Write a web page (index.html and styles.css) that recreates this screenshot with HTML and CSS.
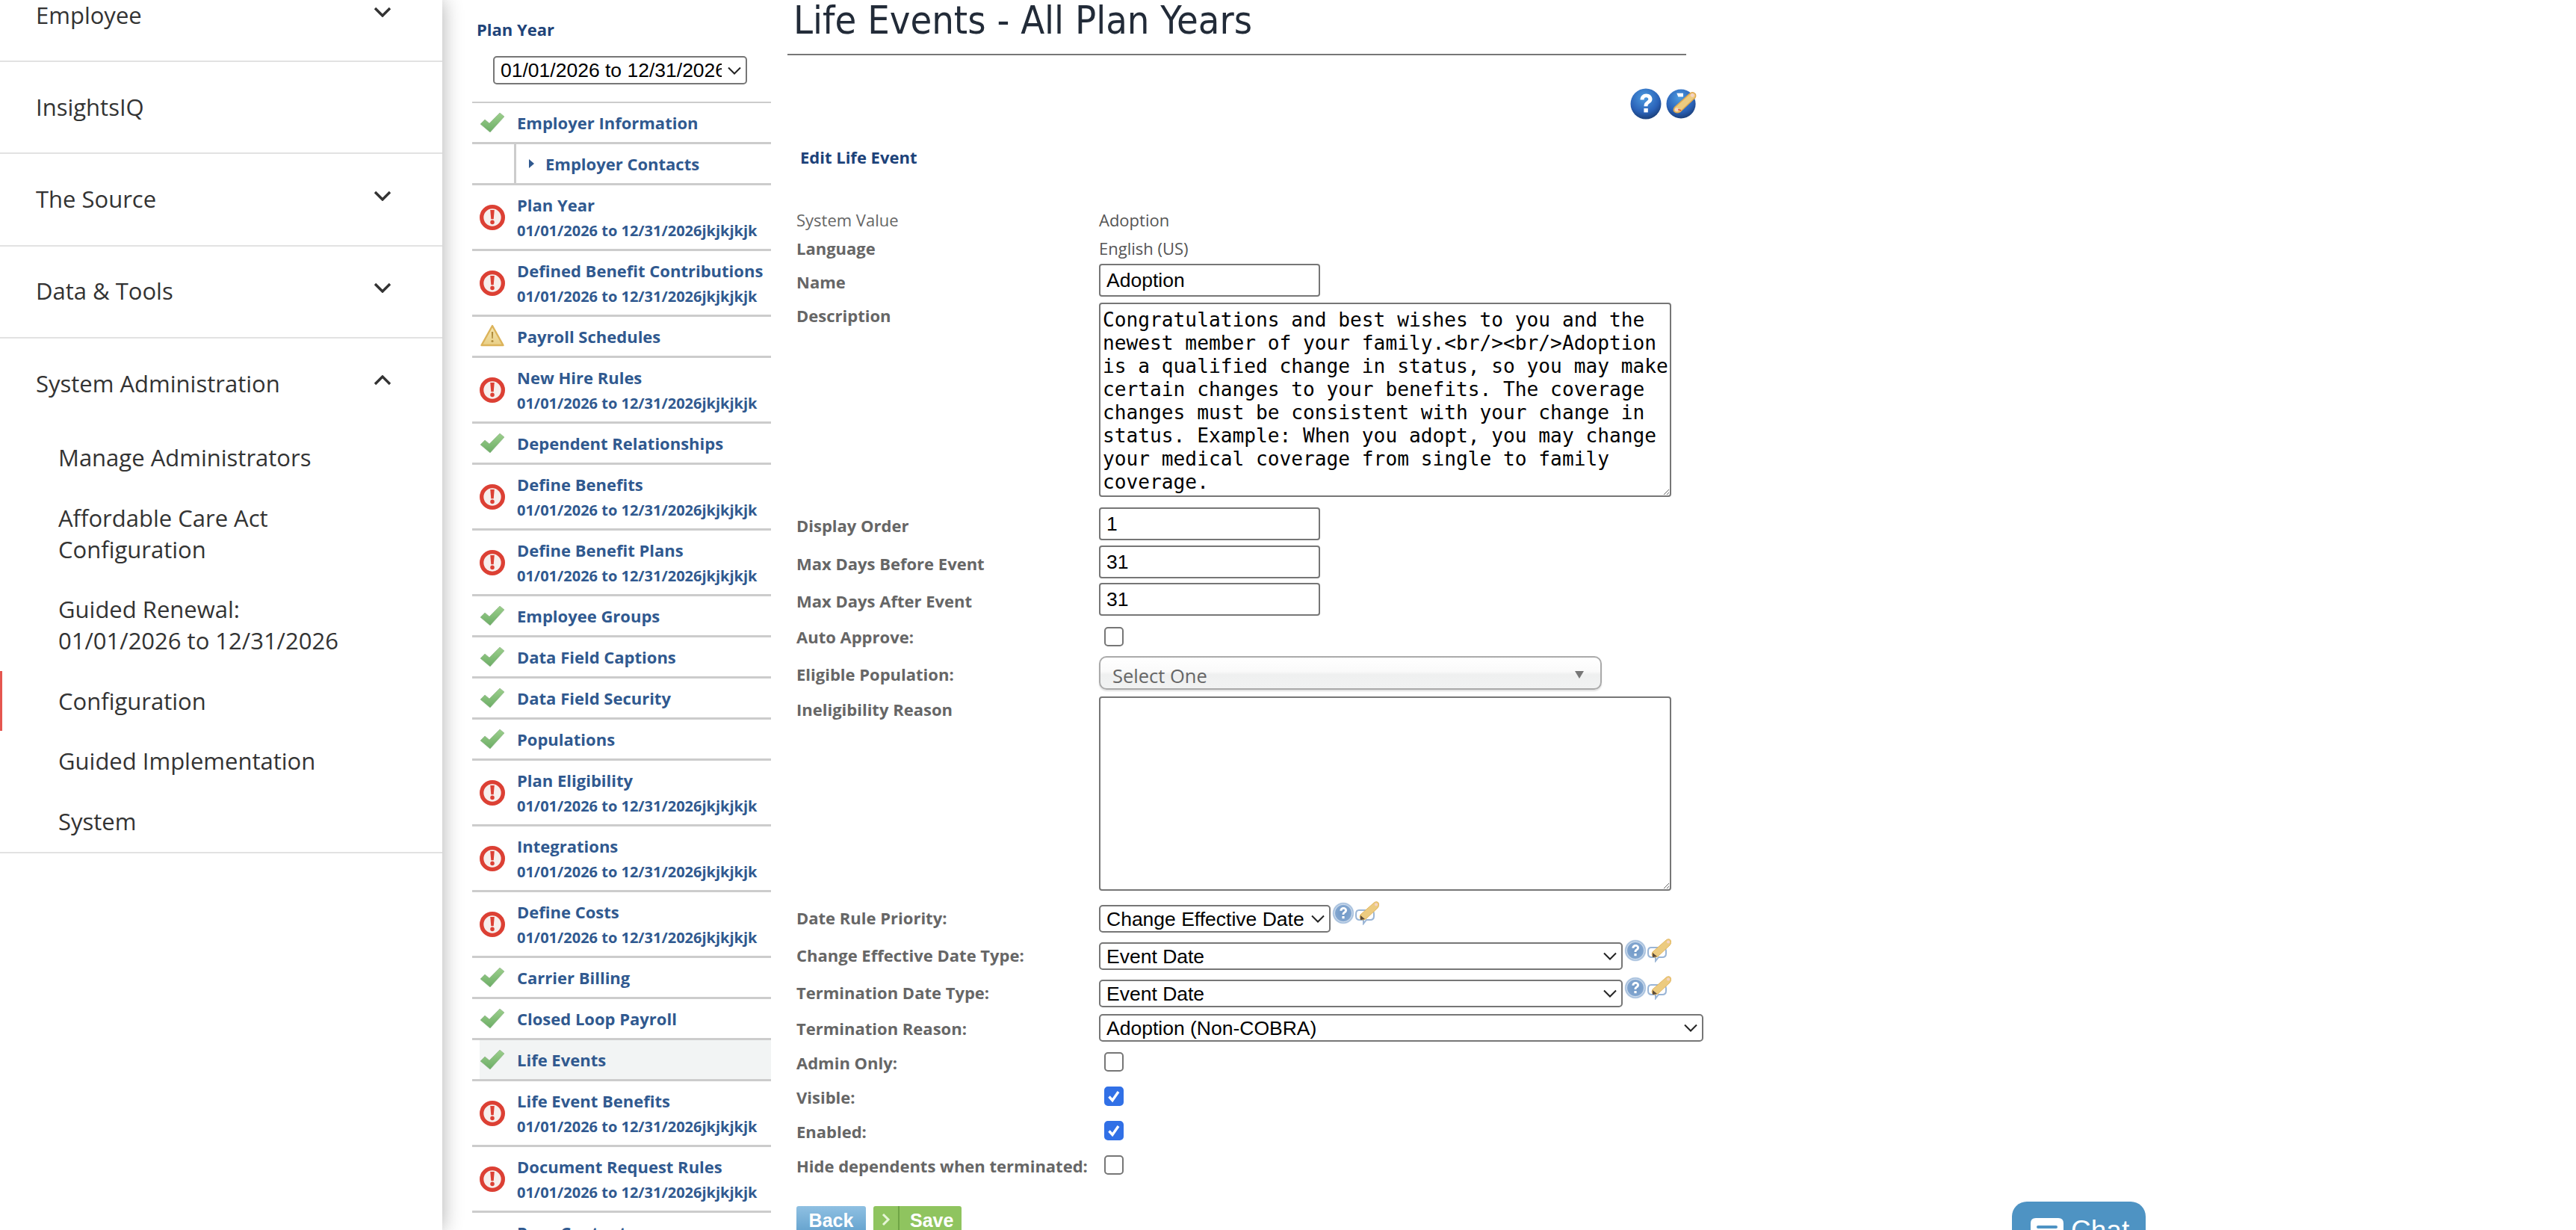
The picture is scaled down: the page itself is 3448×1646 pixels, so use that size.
FILE: index.html
```
<!DOCTYPE html>
<html lang="en">
<head>
<meta charset="utf-8">
<title>Life Events - All Plan Years</title>
<link rel="stylesheet" href="styles.css">
</head>
<body>
<svg class="defs" aria-hidden="true">
  <defs>
    <linearGradient id="gGreen" x1="0" y1="0" x2="0" y2="1"><stop offset="0" stop-color="#9ccf8c"/><stop offset="1" stop-color="#6cad66"/></linearGradient>
    <linearGradient id="gWarn" x1="0" y1="0" x2="0" y2="1"><stop offset="0" stop-color="#f6e6b0"/><stop offset="1" stop-color="#e9cf86"/></linearGradient>
    <radialGradient id="gBall" cx=".45" cy=".3" r=".8"><stop offset="0" stop-color="#4d9be0"/><stop offset=".6" stop-color="#2a62b8"/><stop offset="1" stop-color="#14305f"/></radialGradient>
    <radialGradient id="gSmall" cx=".5" cy=".5" r=".5"><stop offset="0" stop-color="#6f97c6"/><stop offset=".72" stop-color="#81a5cf"/><stop offset=".8" stop-color="#cfdded"/><stop offset=".9" stop-color="#9db9da"/><stop offset="1" stop-color="#dfe8f2"/></radialGradient>
    <symbol id="i-ok" viewBox="0 0 32 26">
      <path d="M0 15 L6 9 L12 14 L26 0 L32 5 L13 26 Z" fill="url(#gGreen)" stroke="#8fb088" stroke-width=".6"/>
    </symbol>
    <symbol id="i-err" viewBox="0 0 32 32">
      <circle cx="16" cy="16" r="13.5" fill="#f7efed" stroke="#dc4034" stroke-width="5"/>
      <path d="M13.4 6.5h5.2l-1 11.5h-3.2z" fill="#dc4034"/>
      <circle cx="16" cy="22" r="2.6" fill="#dc4034"/>
    </symbol>
    <symbol id="i-warn" viewBox="0 0 32 30">
      <path d="M16 2 L30.5 28 H1.5 Z" fill="url(#gWarn)" stroke="#dcb35a" stroke-width="2.4" stroke-linejoin="round"/>
      <path d="M14.8 10h2.4l-.5 9h-1.4z" fill="#b08d3c"/>
      <circle cx="16" cy="22.5" r="1.6" fill="#b08d3c"/>
    </symbol>
    <symbol id="i-help" viewBox="0 0 42 42">
      <circle cx="21" cy="21" r="20.5" fill="url(#gBall)"/>
      <path d="M13.5 15.5c0-5 3.6-8 8-8s8 2.8 8 7c0 3.6-2.4 5-4.2 6.3-1.4 1-1.8 1.7-1.8 3.5h-5c0-3.3.8-4.8 3-6.4 1.6-1.2 2.8-1.8 2.8-3.3 0-1.5-1.2-2.4-2.8-2.4-1.8 0-3 1.2-3 3.2z" fill="#fff"/>
      <rect x="18.4" y="27" width="5.4" height="5.4" fill="#fff"/>
    </symbol>
    <symbol id="i-edit" viewBox="0 0 44 42">
      <circle cx="21" cy="21" r="20.5" fill="url(#gBall)"/>
      <path d="M15 6h9v5h-7z" fill="#fff"/>
      <path d="M13 25 L33 7 Q37 3 41 7 Q43 11 39 14 L20 32 Q14 35 11 31 Q10 28 13 25Z" fill="#eccb80" stroke="#e0a94f" stroke-width="1.5"/>
      <circle cx="37" cy="9" r="2.6" fill="#f5d3c4"/>
      <circle cx="15" cy="29" r="2.6" fill="#f3d8c8"/>
      <path d="M17 29l4 1" stroke="#d33" stroke-width="1.4"/>
    </symbol>
    <symbol id="i-shelp" viewBox="0 0 30 30">
      <circle cx="15" cy="15" r="14.5" fill="url(#gSmall)"/>
      <path d="M10.4 11.8c0-3 2.2-4.8 4.8-4.8s4.8 1.7 4.8 4.2c0 2.1-1.4 3-2.5 3.8-.8.6-1.1 1-1.1 2.1h-2.9c0-2 .5-2.9 1.8-3.9 1-.7 1.7-1.1 1.7-2 0-.9-.7-1.4-1.7-1.4-1.1 0-1.8.7-1.8 1.9z" fill="#fff"/>
      <rect x="13.4" y="19" width="3.2" height="3.2" fill="#fff"/>
    </symbol>
    <symbol id="i-sedit" viewBox="0 0 32 32">
      <path d="M5 12h15q5 0 5 5v3q0 5-5 5h-5l-4 5v-5H6q-5 0-5-5v-3q0-5 4-5z" fill="#fff" stroke="#9ab5d6" stroke-width="2"/>
      <path d="M7 18 L24 3 Q28 -1 31 2 Q33 6 30 9 L14 24 Q9 26 7 24 Q5 21 7 18Z" fill="#eccb80" stroke="#e2b661" stroke-width="1"/>
      <path d="M7 19l6 5-6 1z" fill="#5a4a3a"/>
      <circle cx="28" cy="4.5" r="2" fill="#f5d3c4"/>
    </symbol>
  </defs>
</svg>

<div class="page">
  <aside class="side">
    <div class="side-scroll">
      <div class="side-row"><span>Employee</span><svg class="chev" viewBox="0 0 24 14"><path d="M2 2l10 10L22 2"/></svg></div>
      <div class="side-row"><span>InsightsIQ</span></div>
      <div class="side-row"><span>The Source</span><svg class="chev" viewBox="0 0 24 14"><path d="M2 2l10 10L22 2"/></svg></div>
      <div class="side-row"><span>Data &amp; Tools</span><svg class="chev" viewBox="0 0 24 14"><path d="M2 2l10 10L22 2"/></svg></div>
      <div class="side-group">
        <div class="side-row open"><span>System Administration</span><svg class="chev" viewBox="0 0 24 14"><path d="M2 12L12 2l10 10"/></svg></div>
        <ul class="sub">
          <li>Manage Administrators</li>
          <li>Affordable Care Act<br>Configuration</li>
          <li>Guided Renewal:<br>01/01/2026 to 12/31/2026</li>
          <li class="active">Configuration</li>
          <li>Guided Implementation</li>
          <li>System</li>
        </ul>
      </div>
    </div>
  </aside>

  <nav class="wizard">
    <div class="wiz-title">Plan Year</div>
    <select class="sel wiz-sel"><option>01/01/2026 to 12/31/2026jkjkjkjk</option></select>
    <ul class="steps">
      <li class="step"><svg class="ic ic-ok"><use href="#i-ok"/></svg><a>Employer Information</a></li>
      <li class="step child"><span class="tri"></span><a>Employer Contacts</a></li>
      <li class="step two"><svg class="ic ic-err"><use href="#i-err"/></svg><a>Plan Year<small>01/01/2026 to 12/31/2026jkjkjkjk</small></a></li>
      <li class="step two"><svg class="ic ic-err"><use href="#i-err"/></svg><a>Defined Benefit Contributions<small>01/01/2026 to 12/31/2026jkjkjkjk</small></a></li>
      <li class="step"><svg class="ic ic-warn"><use href="#i-warn"/></svg><a>Payroll Schedules</a></li>
      <li class="step two"><svg class="ic ic-err"><use href="#i-err"/></svg><a>New Hire Rules<small>01/01/2026 to 12/31/2026jkjkjkjk</small></a></li>
      <li class="step"><svg class="ic ic-ok"><use href="#i-ok"/></svg><a>Dependent Relationships</a></li>
      <li class="step two"><svg class="ic ic-err"><use href="#i-err"/></svg><a>Define Benefits<small>01/01/2026 to 12/31/2026jkjkjkjk</small></a></li>
      <li class="step two"><svg class="ic ic-err"><use href="#i-err"/></svg><a>Define Benefit Plans<small>01/01/2026 to 12/31/2026jkjkjkjk</small></a></li>
      <li class="step"><svg class="ic ic-ok"><use href="#i-ok"/></svg><a>Employee Groups</a></li>
      <li class="step"><svg class="ic ic-ok"><use href="#i-ok"/></svg><a>Data Field Captions</a></li>
      <li class="step"><svg class="ic ic-ok"><use href="#i-ok"/></svg><a>Data Field Security</a></li>
      <li class="step"><svg class="ic ic-ok"><use href="#i-ok"/></svg><a>Populations</a></li>
      <li class="step two"><svg class="ic ic-err"><use href="#i-err"/></svg><a>Plan Eligibility<small>01/01/2026 to 12/31/2026jkjkjkjk</small></a></li>
      <li class="step two"><svg class="ic ic-err"><use href="#i-err"/></svg><a>Integrations<small>01/01/2026 to 12/31/2026jkjkjkjk</small></a></li>
      <li class="step two"><svg class="ic ic-err"><use href="#i-err"/></svg><a>Define Costs<small>01/01/2026 to 12/31/2026jkjkjkjk</small></a></li>
      <li class="step"><svg class="ic ic-ok"><use href="#i-ok"/></svg><a>Carrier Billing</a></li>
      <li class="step"><svg class="ic ic-ok"><use href="#i-ok"/></svg><a>Closed Loop Payroll</a></li>
      <li class="step current"><svg class="ic ic-ok"><use href="#i-ok"/></svg><a>Life Events</a></li>
      <li class="step two"><svg class="ic ic-err"><use href="#i-err"/></svg><a>Life Event Benefits<small>01/01/2026 to 12/31/2026jkjkjkjk</small></a></li>
      <li class="step two"><svg class="ic ic-err"><use href="#i-err"/></svg><a>Document Request Rules<small>01/01/2026 to 12/31/2026jkjkjkjk</small></a></li>
      <li class="step two"><svg class="ic ic-err"><use href="#i-err"/></svg><a>Page Content<small>01/01/2026 to 12/31/2026jkjkjkjk</small></a></li>
    </ul>
  </nav>

  <main class="content">
    <h1>Life Events - All Plan Years</h1>
    <div class="help-bar">
      <svg class="big-ic"><use href="#i-help"/></svg>
      <svg class="big-ic"><use href="#i-edit"/></svg>
    </div>
    <h2>Edit Life Event</h2>
    <form class="form">
      <div class="lab plain lc">System Value</div><div class="val">Adoption</div>
      <div class="lab lc">Language</div><div class="val">English (US)</div>
      <label class="lab lb">Name</label><div><input class="txt" type="text" value="Adoption"></div>
      <label class="lab la">Description</label><div><textarea class="area">Congratulations and best wishes to you and the newest member of your family.&lt;br/&gt;&lt;br/&gt;Adoption is a qualified change in status, so you may make certain changes to your benefits. The coverage changes must be consistent with your change in status. Example: When you adopt, you may change your medical coverage from single to family coverage.</textarea></div>
      <label class="lab lb">Display Order</label><div><input class="txt" type="text" value="1"></div>
      <label class="lab lb">Max Days Before Event</label><div><input class="txt" type="text" value="31"></div>
      <label class="lab lb">Max Days After Event</label><div><input class="txt" type="text" value="31"></div>
      <label class="lab ld">Auto Approve:</label><div><input class="chk chk-low" type="checkbox"></div>
      <label class="lab lb">Eligible Population:</label><div><div class="combo"><span>Select One</span><i class="combo-arrow"></i></div></div>
      <label class="lab la">Ineligibility Reason</label><div><textarea class="area area-b"></textarea></div>
      <label class="lab la">Date Rule Priority:</label>
      <div class="ctl"><select class="sel s-date"><option>Change Effective Date</option></select><svg class="sm-h"><use href="#i-shelp"/></svg><svg class="sm-e"><use href="#i-sedit"/></svg></div>
      <label class="lab la">Change Effective Date Type:</label>
      <div class="ctl"><select class="sel s-wide"><option>Event Date</option></select><svg class="sm-h"><use href="#i-shelp"/></svg><svg class="sm-e"><use href="#i-sedit"/></svg></div>
      <label class="lab la">Termination Date Type:</label>
      <div class="ctl"><select class="sel s-wide"><option>Event Date</option></select><svg class="sm-h"><use href="#i-shelp"/></svg><svg class="sm-e"><use href="#i-sedit"/></svg></div>
      <label class="lab lc">Termination Reason:</label><div><select class="sel s-full"><option>Adoption (Non-COBRA)</option></select></div>
      <label class="lab lc">Admin Only:</label><div><input class="chk" type="checkbox"></div>
      <label class="lab lc">Visible:</label><div><input class="chk" type="checkbox" checked></div>
      <label class="lab lc">Enabled:</label><div><input class="chk" type="checkbox" checked></div>
      <label class="lab lc">Hide dependents when terminated:</label><div><input class="chk" type="checkbox"></div>
    </form>
    <div class="actions">
      <button class="btn back" type="button">Back</button>
      <button class="btn save" type="button"><span class="save-arrow"><svg viewBox="0 0 12 18"><path d="M2 2l7 7-7 7"/></svg></span><span class="save-label">Save</span></button>
    </div>
  </main>
</div>

<div class="chat">
  <svg class="chat-ic" viewBox="0 0 44 40"><path d="M7 0h30q7 0 7 7v18q0 7-7 7H18L8 40v-8H7q-7 0-7-7V7q0-7 7-7z" fill="#fff"/><rect x="8" y="10" width="28" height="4" rx="2" fill="#4e93c3"/></svg>
  <span>Chat</span>
</div>
</body>
</html>
```
FILE: styles.css
```
* { box-sizing: border-box; }
html, body { margin: 0; height: 1646px; overflow: hidden; background: #fff; }
body { font-family: "Open Sans", "Liberation Sans", sans-serif; position: relative; }
.defs { position: absolute; width: 0; height: 0; }
.page { display: flex; height: 1646px; overflow: hidden; }

/* left application menu */
.side { flex: 0 0 592px; height: 1646px; background: #fff; box-shadow: 0 0 26px rgba(0,0,0,.32); position: relative; z-index: 2; overflow: hidden; }
.side-scroll { margin-top: -40px; }
.side-row { height: 123.2px; display: flex; align-items: center; justify-content: space-between; padding: 0 68px 0 48px; font-size: 31px; font-weight: 500; color: #333; border-bottom: 2px solid #e2e2e2; }
.side-row.open { border-bottom: 0; height: 122px; }
.side-row span { position: relative; top: -1px; }
.chev { width: 24px; height: 14px; position: relative; top: -5px; fill: none; stroke: #333; stroke-width: 3.4; }
.side-group { border-bottom: 2px solid #e2e2e2; }
.sub { list-style: none; margin: -3px 0 0; padding: 0 0 1px; font-size: 31px; line-height: 42px; color: #333; font-weight: 500; }
.sub li { padding: 19.3px 20px 19.3px 78px; position: relative; }
.sub li.active::before { content: ""; position: absolute; left: 0; top: 0; bottom: 0; width: 3px; background: #e5564f; }

/* wizard nav */
.wizard { flex: 0 0 440px; margin-left: 40px; padding-top: 25px; }
.wiz-title { font-size: 22px; font-weight: 700; color: #1f4479; line-height: 28px; padding-left: 6px; }
.sel { appearance: none; -webkit-appearance: none; height: 37px; border: 2.4px solid #767676; border-radius: 5px; font-family: "Liberation Sans", sans-serif; font-size: 26.5px; color: #000; padding: 0 34px 0 8px; background: #fff url("data:image/svg+xml,%3Csvg xmlns='http://www.w3.org/2000/svg' width='18' height='11' viewBox='0 0 18 11'%3E%3Cpath d='M1 1.5l8 8 8-8' fill='none' stroke='%23222' stroke-width='2'/%3E%3C/svg%3E") no-repeat right 6px center; }
.wiz-sel { display: block; width: 340px; height: 38px; margin: 22px 0 23px 28px; padding-right: 32px; }
.steps { list-style: none; margin: 0; padding: 0; width: 400px; border-top: 2px solid #ccc; }
.step { height: 55px; border-bottom: 3px solid #ccc; display: flex; align-items: center; padding-left: 60px; position: relative; color: #30598f; }
.step.two { height: 88px; }
.step a { font-size: 22px; font-weight: 700; line-height: 30px; color: #30598f; display: block; white-space: nowrap; }
.step small { display: block; font-size: 20px; line-height: 24px; margin-top: 8px; }
.step.two a { position: relative; top: -1px; }
.step.current { background: #f2f4f4; background-clip: padding-box; box-shadow: inset 10px 0 0 #fff; }
.step.child { padding-left: 98px; }
.step.child::before { content: ""; position: absolute; left: 56px; top: 0; bottom: -3px; width: 3px; background: #ccc; }
.tri { position: absolute; left: 76px; top: 20px; border-left: 7px solid #30598f; border-top: 6px solid transparent; border-bottom: 6px solid transparent; }
.ic { position: absolute; left: 10px; }
.ic-ok { width: 32px; height: 26px; top: 13px; left: 11px; }
.ic-err { width: 34px; height: 34px; top: 26px; }
.ic-warn { width: 34px; height: 30px; top: 10px; }

/* main content */
.content { flex: 0 0 1270px; margin-left: -18px; position: relative; }
h1 { margin: -4px 0 0; width: 1203px; height: 78px; border-bottom: 2px solid #777; padding: 0 0 0 8px; font-family: "DejaVu Sans", sans-serif; font-stretch: condensed; font-weight: 400; font-size: 52px; line-height: 62px; color: #222b38; white-space: nowrap; }
.help-bar { display: flex; gap: 6px; margin: 44px 0 0 1128px; height: 42px; }
.big-ic { width: 42px; height: 42px; overflow: visible; }
h2 { margin: 35px 0 0 17px; font-size: 22px; font-weight: 700; line-height: 30px; color: #1c4279; }
.form { display: grid; grid-template-columns: 405px 1fr; grid-template-rows: 38px 40px 52px 274px 51px 50px 51px 47px 54px 279px 50px 50px 46px 46px 46px 46px 46px 46px; margin: 50px 0 0 12px; }
.lab { font-size: 22px; font-weight: 700; color: #666; line-height: 30px; white-space: nowrap; }
.lab.plain { font-weight: 400; }
.la { padding-top: 2px; }
.lb { padding-top: 9px; }
.lc { padding-top: 4px; }
.ld { padding-top: 6px; }
.val { font-size: 22px; color: #555; line-height: 30px; padding-top: 4px; }
.txt { display: block; width: 296px; height: 44px; border: 2px solid #767676; border-radius: 4px; padding: 0 8px; font-family: "Liberation Sans", sans-serif; font-size: 26.5px; color: #000; outline: 0; background: #fff; }
.area { display: block; width: 766px; height: 260px; border: 2px solid #767676; border-radius: 4px; padding: 6px 0 2px 3px; font-family: "DejaVu Sans Mono", monospace; font-size: 26.2px; line-height: 31px; color: #000; resize: both; background: #fff; overflow: hidden; }
.ctl { display: flex; align-items: flex-start; position: relative; }
.s-date { width: 310px; }
.s-wide { width: 701px; }
.s-full { width: 809px; }
.sm-h { width: 30px; height: 30px; margin: -4px 0 0 2px; }
.sm-e { width: 32px; height: 32px; margin: -5px 0 0 1px; }
.chk { appearance: none; -webkit-appearance: none; display: block; width: 26px; height: 26px; margin: 5px 0 0 7px; border: 2px solid #767676; border-radius: 5px; background: #fff; }
.chk-low { margin-top: 8px; }
.chk:checked { border-color: #3170e6; background: #3170e6 url("data:image/svg+xml,%3Csvg xmlns='http://www.w3.org/2000/svg' width='22' height='22' viewBox='0 0 22 22'%3E%3Cpath d='M4.5 11.5l4.5 5L17 5' fill='none' stroke='%23fff' stroke-width='3.4'/%3E%3C/svg%3E") no-repeat center; }
.combo { width: 673px; height: 45px; border: 2px solid #aaa; border-radius: 10px; background: linear-gradient(#fff 0, #fafafa 45%, #eff0f0 55%, #f1f2f2 100%); box-shadow: 0 2px 2px rgba(0,0,0,.12); padding: 7px 0 0 16px; font-size: 25.5px; line-height: 34px; color: #666; position: relative; }
.combo-arrow { position: absolute; right: 22px; top: 18px; border-top: 10px solid #777; border-left: 6px solid transparent; border-right: 6px solid transparent; }
.actions { display: flex; gap: 10px; margin: 27px 0 0 12px; }
.btn { border: 0; padding: 0 0 6px; height: 44px; color: #fff; font-family: "Liberation Sans", sans-serif; font-weight: 700; font-size: 25px; border-radius: 3px 3px 0 0; }
.back { width: 93px; background: linear-gradient(#8fc0e2, #5a9bc9); }
.save { width: 118px; background: #8fc45f; display: flex; padding: 0; }
.save-arrow { flex: 0 0 35px; height: 100%; border-right: 2px solid #6fa545; display: flex; justify-content: center; padding-top: 9px; }
.save-arrow svg { width: 12px; height: 18px; fill: none; stroke: #e8f5d8; stroke-width: 3; }
.save-label { padding: 5px 0 0 14px; line-height: 28px; }

/* chat launcher */
.chat { position: absolute; left: 2693px; top: 1608px; width: 179px; height: 60px; background: #4e93c3; border-radius: 20px 20px 0 0; display: flex; align-items: flex-start; gap: 10px; padding: 22px 0 0 25px; color: #fff; font-family: "Liberation Sans", sans-serif; font-size: 37px; line-height: 34px; }
.chat-ic { width: 44px; height: 40px; flex: none; }
```
